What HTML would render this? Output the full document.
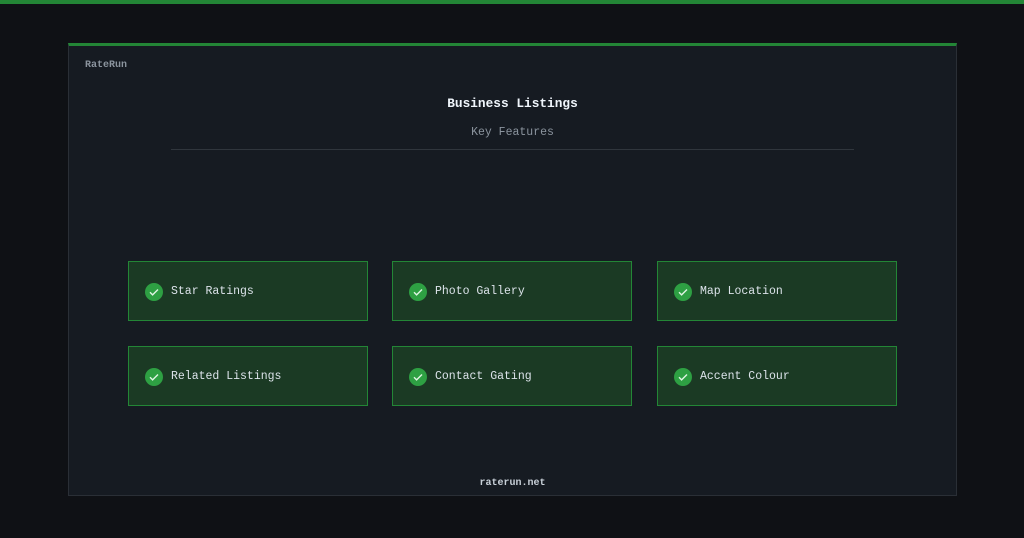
<!DOCTYPE html>
<html><head><style>
*{margin:0;padding:0;box-sizing:border-box}
body{width:1024px;height:538px;background:#0f1115;font-family:"Liberation Mono",monospace;position:relative;overflow:hidden}
.top{position:absolute;left:0;top:0;width:1024px;height:4px;background:#238636}
.panel{position:absolute;left:68px;top:43px;width:889px;height:453px;background:#161b22;border:1px solid #2a2f36;border-top:3px solid #238636}
.brand{position:absolute;left:16px;top:14px;font-size:10px;font-weight:bold;color:#8b949e}
.title{position:absolute;left:0;width:100%;top:50px;text-align:center;font-size:12.8px;font-weight:bold;color:#f0f6fc}
.sub{position:absolute;left:0;width:100%;top:80px;text-align:center;font-size:11.5px;color:#8b949e}
.div{position:absolute;left:102px;width:683px;top:103px;height:1px;background:#30363d}
.card{position:absolute;width:240px;height:60px;background:#1b3a24;border:1px solid #238636;display:flex;align-items:center;padding-left:16px;padding-top:1px;font-size:11.5px;color:#dce3ea}
.ck{width:18px;height:18px;border-radius:50%;background:#2ea043;margin-right:8px;display:flex;align-items:center;justify-content:center}
.foot{position:absolute;left:0;width:100%;top:432px;text-align:center;font-size:10px;font-weight:bold;color:#c9d1d9}
</style></head><body>
<div class="top"></div>
<div class="panel">
<div class="brand">RateRun</div>
<div class="title">Business Listings</div>
<div class="sub">Key Features</div>
<div class="div"></div>
<div class="foot">raterun.net</div>
</div>
<div class="card" style="left:128px;top:261px"><span class="ck"><svg width="12" height="12" viewBox="0 0 12 12"><path d="M2 6.3l2.6 2.6L10 3.5" fill="none" stroke="#dff5e3" stroke-width="1.4"/></svg></span>Star Ratings</div>
<div class="card" style="left:392px;top:261px"><span class="ck"><svg width="12" height="12" viewBox="0 0 12 12"><path d="M2 6.3l2.6 2.6L10 3.5" fill="none" stroke="#dff5e3" stroke-width="1.4"/></svg></span>Photo Gallery</div>
<div class="card" style="left:657px;top:261px"><span class="ck"><svg width="12" height="12" viewBox="0 0 12 12"><path d="M2 6.3l2.6 2.6L10 3.5" fill="none" stroke="#dff5e3" stroke-width="1.4"/></svg></span>Map Location</div>
<div class="card" style="left:128px;top:346px"><span class="ck"><svg width="12" height="12" viewBox="0 0 12 12"><path d="M2 6.3l2.6 2.6L10 3.5" fill="none" stroke="#dff5e3" stroke-width="1.4"/></svg></span>Related Listings</div>
<div class="card" style="left:392px;top:346px"><span class="ck"><svg width="12" height="12" viewBox="0 0 12 12"><path d="M2 6.3l2.6 2.6L10 3.5" fill="none" stroke="#dff5e3" stroke-width="1.4"/></svg></span>Contact Gating</div>
<div class="card" style="left:657px;top:346px"><span class="ck"><svg width="12" height="12" viewBox="0 0 12 12"><path d="M2 6.3l2.6 2.6L10 3.5" fill="none" stroke="#dff5e3" stroke-width="1.4"/></svg></span>Accent Colour</div>
</body></html>
